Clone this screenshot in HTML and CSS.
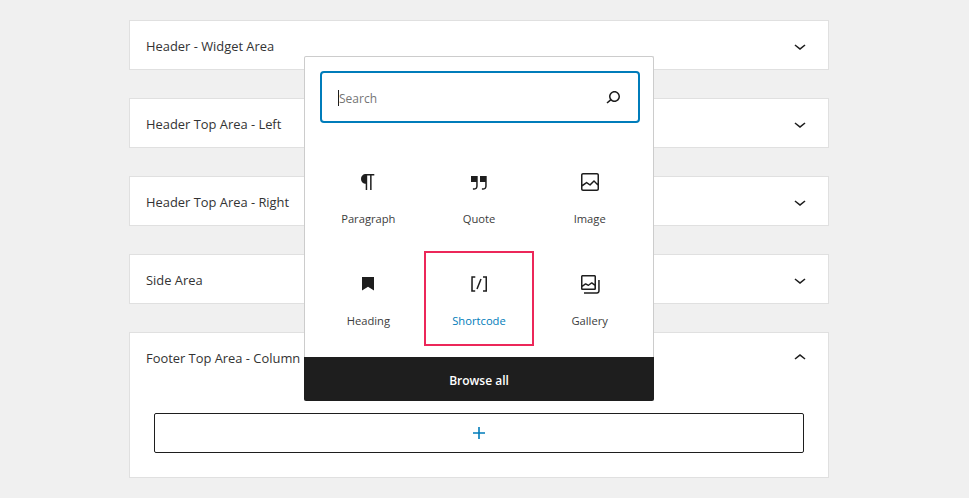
FILE: index.html
```html
<!DOCTYPE html>
<html lang="en">
<head>
    <meta charset="UTF-8">
    <title>Widget Areas</title>
    <link rel="stylesheet" href="styles.css">
</head>
<body>
<div class="areas">
    <div class="area">
        <div class="area-head">
            <span class="area-title">Header - Widget Area</span>
            <svg class="chevron" viewBox="0 0 24 24"><path d="M17.5 11.6L12 16l-5.5-4.4.9-1.2L12 14l4.5-3.6 1 1.2z"/></svg>
        </div>
    </div>
    <div class="area">
        <div class="area-head">
            <span class="area-title">Header Top Area - Left</span>
            <svg class="chevron" viewBox="0 0 24 24"><path d="M17.5 11.6L12 16l-5.5-4.4.9-1.2L12 14l4.5-3.6 1 1.2z"/></svg>
        </div>
    </div>
    <div class="area">
        <div class="area-head">
            <span class="area-title">Header Top Area - Right</span>
            <svg class="chevron" viewBox="0 0 24 24"><path d="M17.5 11.6L12 16l-5.5-4.4.9-1.2L12 14l4.5-3.6 1 1.2z"/></svg>
        </div>
    </div>
    <div class="area">
        <div class="area-head">
            <span class="area-title">Side Area</span>
            <svg class="chevron" viewBox="0 0 24 24"><path d="M17.5 11.6L12 16l-5.5-4.4.9-1.2L12 14l4.5-3.6 1 1.2z"/></svg>
        </div>
    </div>
    <div class="area">
        <div class="area-head">
            <span class="area-title">Footer Top Area - Column 1</span>
            <svg class="chevron" viewBox="0 0 24 24"><path d="M6.5 12.4L12 8l5.5 4.4-.9 1.2L12 10l-4.5 3.6-1-1.2z"/></svg>
        </div>
        <div class="area-body">
            <div class="add-block">
                <svg class="plus" viewBox="0 0 24 24"><path d="M18 11.2h-5.2V6h-1.6v5.2H6v1.6h5.2V18h1.6v-5.2H18z"/></svg>
            </div>
        </div>
    </div>
</div>

<div class="inserter">
    <div class="search-wrap">
        <div class="search">
            <span class="caret"></span>
            <span class="search-text">Search</span>
            <svg class="search-icon" viewBox="0 0 24 24"><path d="M13.5 6C10.5 6 8 8.5 8 11.5c0 1.1.3 2.1.9 3l-3.4 3 1 1.1 3.4-2.9c1 .9 2.2 1.4 3.6 1.4 3 0 5.5-2.5 5.5-5.5C19 8.5 16.5 6 13.5 6zm0 9.5c-2.2 0-4-1.8-4-4s1.8-4 4-4 4 1.8 4 4-1.8 4-4 4z"/></svg>
        </div>
    </div>
    <div class="blocks">
        <div class="block">
            <svg class="block-icon" viewBox="0 0 24 24"><path d="M18.3 4H9.9v-.1l-.9.2c-2.3.4-4 2.4-4 4.8s1.7 4.4 4 4.8l.7.1V20h1.5V5.5h2.9V20h1.5V5.5h2.7V4z"/></svg>
            <span class="block-name">Paragraph</span>
        </div>
        <div class="block">
            <svg class="block-icon" viewBox="0 0 24 24"><path d="M13 6v6h5.2v4c0 .8-.2 1.4-.5 1.7-.6.6-1.6.6-2.5.5h-.3v1.5h.5c1 0 2.3-.1 3.3-1 .6-.6 1-1.6 1-2.8V6H13zm-9 6h5.2v4c0 .8-.2 1.4-.5 1.7-.6.6-1.6.6-2.5.5h-.3v1.5h.5c1 0 2.3-.1 3.3-1 .6-.6 1-1.6 1-2.8V6H4v6z"/></svg>
            <span class="block-name">Quote</span>
        </div>
        <div class="block">
            <svg class="block-icon" viewBox="0 0 24 24"><path d="M19 3H5c-1.1 0-2 .9-2 2v14c0 1.1.9 2 2 2h14c1.100 0 2-.9 2-2V5c0-1.100-.9-2-2-2zM5 4.500h14c.3 0 .5.2.5.5v8.400l-3-2.900c-.3-.3-.8-.3-1 0L11.900 14 9 12c-.3-.2-.6-.2-.8 0l-3.700 2.600V5c0-.3.2-.5.500-.5zm14 15H5c-.3 0-.5-.2-.5-.5v-2.400l4.100-3 3 1.900c.3.2.7.2.900-.1L16 12l3.500 3.400V19c0 .3-.2.5-.5.5z"/></svg>
            <span class="block-name">Image</span>
        </div>
        <div class="block">
            <svg class="block-icon" viewBox="0 0 24 24"><path d="M6 5v13.500l6-3.700 6 3.700V5z"/></svg>
            <span class="block-name">Heading</span>
        </div>
        <div class="block block-active">
            <svg class="block-icon" viewBox="0 0 24 24"><path d="M16 4.200v1.500h2.500v12.500H16v1.500h4V4.200h-4zM4.200 19.800h4v-1.500H5.800V5.800h2.500V4.200h-4l-.1 15.600zm5.100-3.100l1.400.6 4-10-1.400-.6-4 10z"/></svg>
            <span class="block-name">Shortcode</span>
        </div>
        <div class="block">
            <svg class="block-icon" viewBox="0 0 24 24"><path d="M20.200 8v11c0 .7-.6 1.200-1.200 1.200H6v1.500h13c1.500 0 2.700-1.200 2.700-2.700V8h-1.500zM18 16.400V4.600c0-.9-.7-1.600-1.600-1.600H4.600C3.700 3 3 3.700 3 4.600v11.800c0 .9.7 1.600 1.600 1.600h11.800c.9 0 1.600-.7 1.600-1.600zM4.500 4.600c0-.1.100-.1.100-.1h11.800c.1 0 .1.100.1.100V12l-2.300-1.700c-.3-.2-.6-.2-.9 0l-2.900 2.100L8 11.300c-.3-.2-.7-.2-.9 0l-2.600 2V4.600zm0 11.800v-1.300l3.100-2.300 2.600 1.100c.2.100.5.100.7-.1l2.800-2 2.700 2v2.600c0 .1-.1.100-.1.100H4.600c-.1 0-.1-.1-.1-.1z"/></svg>
            <span class="block-name">Gallery</span>
        </div>
    </div>
    <div class="browse">Browse all</div>
</div>
</body>
</html>
```

FILE: styles.css
```css
body {
    margin: 0;
    height: 498px;
    overflow: hidden;
    background: #f0f0f0;
    font-family: "Open Sans", Arial, sans-serif;
    color: #1e1e1e;
}

.areas {
    width: 700px;
    margin-left: 129px;
    padding-top: 20px;
    display: flex;
    flex-direction: column;
    gap: 28px;
}

.area {
    background: #fff;
    border: 1px solid #e0e0e0;
}

.area-head {
    height: 48px;
    box-sizing: border-box;
    padding: 2px 16px 0 16px;
    display: flex;
    align-items: center;
    justify-content: space-between;
}

.area-title {
    font-size: 12.9px;
    color: #333;
}

.chevron {
    width: 24px;
    height: 24px;
    fill: #1e1e1e;
}

.area-body {
    padding: 32px 24px 24px;
}

.add-block {
    height: 38px;
    border: 1px solid #1e1e1e;
    border-radius: 2px;
    display: flex;
    align-items: center;
    justify-content: center;
}

.plus {
    width: 24px;
    height: 24px;
    fill: #007cba;
}

/* popup over the cards */
.inserter {
    position: absolute;
    left: 304px;
    top: 56px;
    width: 350px;
    height: 345px;
    box-sizing: border-box;
    background: #fff;
    border: 1px solid #ccc;
    border-bottom: 0;
    border-radius: 2px;
    display: flex;
    flex-direction: column;
}

.search-wrap {
    padding: 14px 13px 0 15px;
}

.search {
    height: 52px;
    box-sizing: border-box;
    border: 2px solid #007cba;
    border-radius: 4px;
    padding: 0 13px 0 16px;
    display: flex;
    align-items: center;
}

.caret {
    width: 1px;
    height: 16px;
    background: #1e1e1e;
    margin-top: 1px;
}

.search-text {
    flex: 1;
    font-size: 12px;
    color: #757575;
    padding-top: 3px;
}

.search-icon {
    width: 24px;
    height: 24px;
    fill: #1e1e1e;
}

.blocks {
    margin-top: 26px;
    padding: 0 8px;
    display: grid;
    grid-template-columns: repeat(3, 1fr);
    grid-auto-rows: 95px;
    row-gap: 7px;
}

.block {
    display: flex;
    flex-direction: column;
    align-items: center;
    padding-top: 21px;
    box-sizing: border-box;
}

.block-icon {
    width: 24px;
    height: 24px;
    fill: #1e1e1e;
}

.block-name {
    margin-top: 16px;
    font-size: 11.2px;
    line-height: 18px;
    color: #3c3c3c;
}

.block-active {
    outline: 2px solid #ec2759;
    outline-offset: -2px;
}

.block-active .block-name {
    color: #007cba;
}

.browse {
    margin: auto -1px 0;
    height: 44px;
    background: #1e1e1e;
    border-radius: 0 0 2px 2px;
    color: #fff;
    font-size: 12px;
    font-weight: 600;
    padding-top: 2px;
    box-sizing: border-box;
    display: flex;
    align-items: center;
    justify-content: center;
}
```
